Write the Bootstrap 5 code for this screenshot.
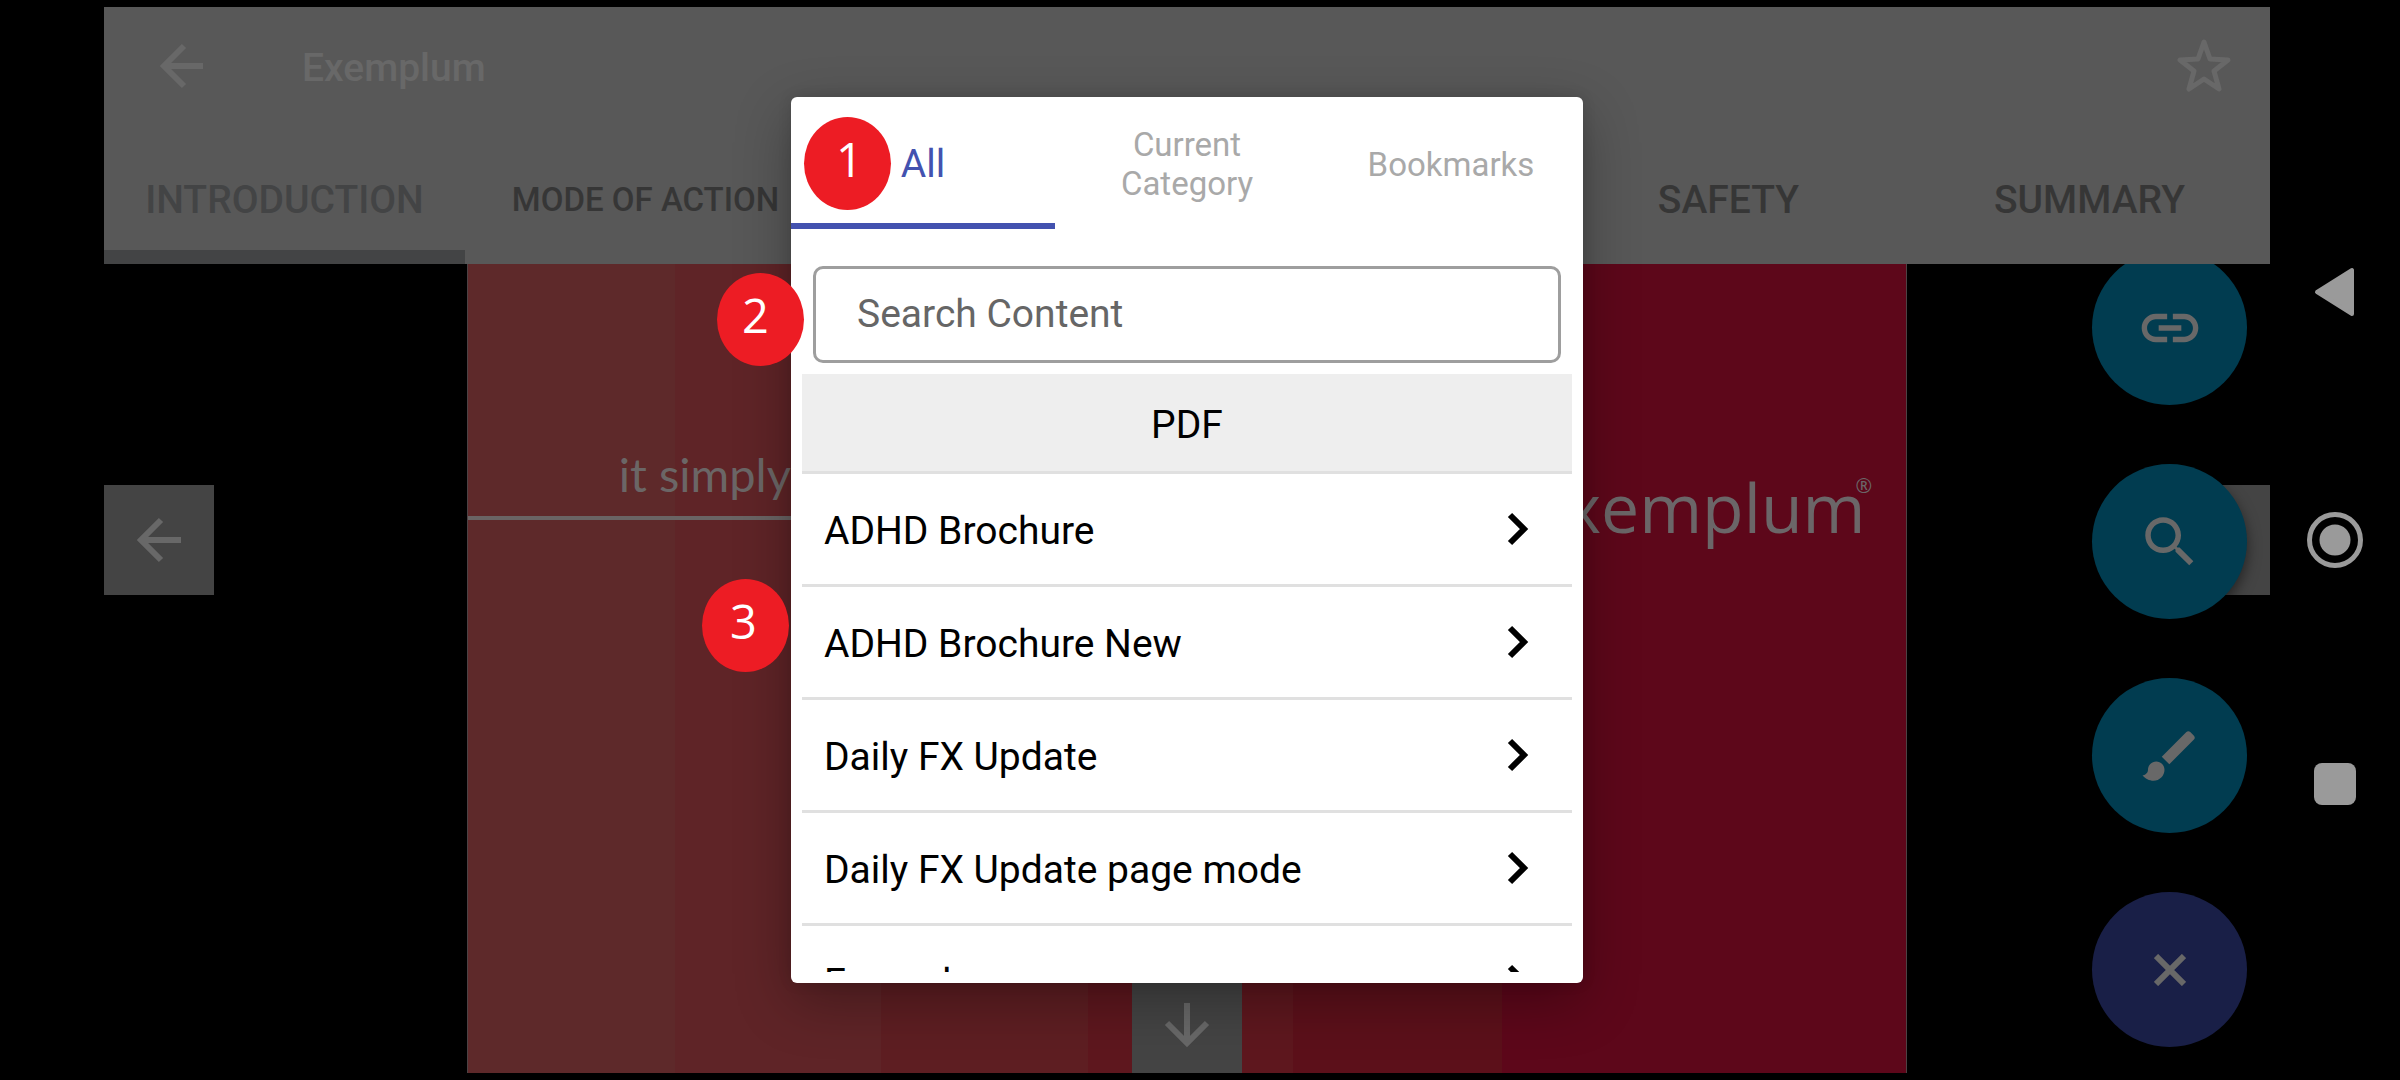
<!DOCTYPE html>
<html lang="en">
<head>
<meta charset="utf-8">
<meta name="viewport" content="width=device-width, initial-scale=1">
<title>Exemplum</title>
<link href="https://cdn.jsdelivr.net/npm/bootstrap@5.3.0/dist/css/bootstrap.min.css" rel="stylesheet">
<script src="https://cdn.jsdelivr.net/npm/bootstrap@5.3.0/dist/js/bootstrap.bundle.min.js"></script>
<style>
body { background: #000; font-family: Roboto, "Liberation Sans", sans-serif; color: #000; }
button { font-family: inherit; }
.device { padding-left: 104px; }
.stage { padding: 7px 0; }
.app-head { background: #585858; height: 257px; z-index: 2; }
.title-row { height: 120px; padding: 0 39px 0 51px; color: #686868; }
.app-title { font-size: 39px; font-weight: 500; line-height: 48px; margin-left: 95px; padding-top: 2px; }
.plain-btn { background: none; border: 0; padding: 0; display: flex; color: inherit; }
.chapter { flex: 1 1 0; color: #363636; font-size: 39px; font-weight: 500; line-height: 48px; text-decoration: none; text-align: center; padding: 49px 0 26px; border-bottom: 14px solid transparent; white-space: nowrap; }
.chapter-long { font-size: 33px; }
.chapter.active { color: #434445; border-color: #434445; }
.slide-art { width: 66.5%; padding-top: 180px; border: 1px solid #4c4244; border-width: 0 1px;
  background: linear-gradient(90deg, #5e292a 14.4%, #5f2427 14.4% 28.7%, #5e1e22 28.7% 43.1%, #5e171e 43.1% 57.4%, #5c101a 57.4% 71.9%, #5d071a 71.9%); }
.tagline { font-family: Lato, sans-serif; font-weight: 400; font-size: 47px; line-height: 60px; color: #6b6666; padding-left: 151px; margin: 0 0 12px; }
.rule { height: 4px; background: #6a6464; }
.brand { font-family: "Open Sans", "Noto Sans", sans-serif; font-size: 68px; font-weight: 500; line-height: 92px; color: #6b6668; padding-right: 34px; margin: 17px 0 0; }
.brand sup { font-size: 20px; top: -40px; margin-left: -10px; }
.pager { width: 110px; height: 110px; background: #444; color: #686868; justify-content: center; align-items: center; }
.pager-row { padding-bottom: 7px; padding-top: 7px; }
.pager-down { padding-top: 14px; }
.fabs { right: 23px; bottom: 33px; gap: 59px; z-index: 1; }
.fab { width: 155px; height: 155px; border-radius: 50%; background: #013c50; color: #686868; align-items: center; justify-content: center; box-shadow: 0 6px 14px rgba(0,0,0,.5); }
.fab-close { background: #191f47; }
.sysnav { width: 130px; gap: 195px; color: #9a9a9a; padding-bottom: 8px; }
.dialog-layer { z-index: 5; }
.dialog-box { width: 792px; height: 886px; background: #fff; border-radius: 6px; box-shadow: 0 18px 56px rgba(0,0,0,.3), 0 0 14px rgba(0,0,0,.12); padding-bottom: 11px; }
.filter { flex: 1 1 0; height: 132px; color: #a9a9a9; font-size: 33px; line-height: 39px; border-bottom: 6px solid transparent; align-items: center; justify-content: center; padding: 8px 30px 0; }
.filter.active { color: #4352af; border-color: #4352af; font-size: 39px; }
.search { margin: 37px 22px 11px; }
.search input { height: 97px; border: 3px solid #9e9e9e; border-radius: 10px; padding: 0 41px 2px; font-size: 39px; background: #fff; }
.search input::placeholder { color: #666; opacity: 1; }
.results { margin: 0 11px; overflow: hidden; flex: 1 1 0; min-height: 0; font-size: 39px; line-height: 48px; }
.group-head { height: 100px; background: #eee; border-bottom: 3px solid #e0e0e0; font-size: 39px; line-height: 48px; font-weight: 400; padding-top: 4px; margin: 0; }
.entry { height: 113px; border-bottom: 3px solid #e0e0e0; padding: 4px 42px 0 22px; color: #000; text-decoration: none; }
.entry svg { margin-bottom: 5px; }
.note { width: 87px; height: 93px; border-radius: 50%; background: #ed1c24; color: #fff; font-family: "Open Sans", "Noto Sans", sans-serif; font-size: 47px; line-height: 85px; text-align: center; }
.note-1 { left: 13px; top: 20px; padding-left: 4px; }
.note-2 { left: -74px; top: 176px; padding-right: 10px; }
.note-3 { left: -89px; top: 482px; padding-right: 4px; }
</style>
</head>
<body>
<div class="device d-flex vh-100 overflow-hidden">
  <main class="stage d-flex flex-column flex-grow-1 position-relative">
    <header class="app-head d-flex flex-column justify-content-between position-relative">
      <div class="title-row d-flex align-items-center">
        <button class="plain-btn" type="button" aria-label="Back"><svg width="52" height="64" viewBox="0 0 52 64" fill="none" stroke="currentColor" stroke-width="6"><path d="M48 31H9M29 11L9 31L29 51"/></svg></button>
        <h1 class="app-title mb-0">Exemplum</h1>
        <button class="plain-btn ms-auto" type="button" aria-label="Bookmark"><svg width="54" height="58" viewBox="0 0 54 58" fill="none" stroke="currentColor" stroke-width="5" stroke-linejoin="round"><path d="M27 4L33 21L51 22L37 33L42 51L27 41L12 51L17 33L3 22L21 21Z"/></svg></button>
      </div>
      <nav class="d-flex">
        <a class="chapter active" href="#">INTRODUCTION</a>
        <a class="chapter chapter-long" href="#">MODE OF ACTION</a>
        <a class="chapter" href="#">EFFICACY</a>
        <a class="chapter" href="#">DOSING</a>
        <a class="chapter" href="#">SAFETY</a>
        <a class="chapter" href="#">SUMMARY</a>
      </nav>
    </header>

    <section class="slide-art flex-grow-1 align-self-center d-flex align-items-start">
      <div class="w-50">
        <p class="tagline">it simply</p>
        <div class="rule"></div>
      </div>
      <p class="brand w-50 text-end">exemplum<sup>®</sup></p>
    </section>

    <div class="pager-row position-absolute top-0 start-0 w-100 h-100 d-flex align-items-center justify-content-between">
      <button class="plain-btn pager" type="button" aria-label="Previous slide"><svg width="52" height="52" viewBox="0 0 52 52" fill="none" stroke="currentColor" stroke-width="6"><path d="M48 26H8M28 6L8 26L28 46"/></svg></button>
      <button class="plain-btn pager pager-down align-self-end" type="button" aria-label="Next page"><svg width="52" height="52" viewBox="0 0 52 52" fill="none" stroke="currentColor" stroke-width="6"><path d="M26 4V44M6 24L26 44L46 24"/></svg></button>
      <button class="plain-btn pager" type="button" aria-label="Next slide"></button>
    </div>

    <div class="fabs position-absolute d-flex flex-column">
      <button class="plain-btn fab" type="button" aria-label="Link"><svg width="68" height="68" viewBox="0 0 24 24" fill="currentColor"><path d="M3.9 12c0-1.71 1.39-3.1 3.1-3.1h4V7H7c-2.76 0-5 2.24-5 5s2.24 5 5 5h4v-1.900H7c-1.710 0-3.100-1.390-3.100-3.100zM8 13h8v-2H8v2zm9-6h-4v1.900h4c1.710 0 3.100 1.390 3.100 3.100s-1.390 3.100-3.100 3.100h-4V17h4c2.760 0 5-2.240 5-5s-2.240-5-5-5z"/></svg></button>
      <button class="plain-btn fab" type="button" aria-label="Search"><svg width="66" height="66" viewBox="0 0 24 24" fill="currentColor"><path d="M15.500 14h-.790l-.280-.270C15.410 12.590 16 11.110 16 9.500 16 5.910 13.090 3 9.500 3S3 5.910 3 9.500 5.910 16 9.500 16c1.610 0 3.090-.590 4.230-1.570l.270.280v.790l5 4.990L20.490 19l-4.990-5zm-6 0C7.010 14 5 11.990 5 9.500S7.010 5 9.500 5 14 7.010 14 9.500 11.990 14 9.500 14z"/></svg></button>
      <button class="plain-btn fab" type="button" aria-label="Draw"><svg width="66" height="66" viewBox="0 0 24 24" fill="currentColor"><path d="M7 14c-1.660 0-3 1.340-3 3 0 1.310-1.160 2-2 2 .920 1.220 2.490 2 4 2 2.210 0 4-1.790 4-4 0-1.660-1.340-3-3-3zm13.710-9.370l-1.340-1.340c-.390-.390-1.020-.390-1.410 0L9 12.250 11.750 15l8.960-8.960c.390-.390.390-1.020 0-1.410z"/></svg></button>
      <button class="plain-btn fab fab-close" type="button" aria-label="Close menu"><svg width="32" height="32" viewBox="0 0 32 32" stroke="currentColor" stroke-width="6"><path d="M2 2L30 30M30 2L2 30"/></svg></button>
    </div>

    <div class="dialog-layer position-absolute top-0 start-0 w-100 h-100 d-flex align-items-center justify-content-center">
      <div class="dialog-box position-relative d-flex flex-column" role="dialog" aria-label="Content">
        <div class="d-flex">
          <button class="plain-btn filter active" type="button">All</button>
          <button class="plain-btn filter" type="button">Current Category</button>
          <button class="plain-btn filter" type="button">Bookmarks</button>
        </div>
        <div class="search">
          <label class="visually-hidden" for="q">Search Content</label>
          <input class="form-control" id="q" type="text" placeholder="Search Content">
        </div>
        <div class="results">
          <h2 class="group-head d-flex align-items-center justify-content-center">PDF</h2>
          <a class="entry d-flex align-items-center justify-content-between" href="#">ADHD Brochure<svg width="24" height="36" viewBox="0 0 24 36" fill="none" stroke="currentColor" stroke-width="6"><path d="M4 4L18 18L4 32"/></svg></a>
          <a class="entry d-flex align-items-center justify-content-between" href="#">ADHD Brochure New<svg width="24" height="36" viewBox="0 0 24 36" fill="none" stroke="currentColor" stroke-width="6"><path d="M4 4L18 18L4 32"/></svg></a>
          <a class="entry d-flex align-items-center justify-content-between" href="#">Daily FX Update<svg width="24" height="36" viewBox="0 0 24 36" fill="none" stroke="currentColor" stroke-width="6"><path d="M4 4L18 18L4 32"/></svg></a>
          <a class="entry d-flex align-items-center justify-content-between" href="#">Daily FX Update page mode<svg width="24" height="36" viewBox="0 0 24 36" fill="none" stroke="currentColor" stroke-width="6"><path d="M4 4L18 18L4 32"/></svg></a>
          <a class="entry d-flex align-items-center justify-content-between" href="#">Exemplum<svg width="24" height="36" viewBox="0 0 24 36" fill="none" stroke="currentColor" stroke-width="6"><path d="M4 4L18 18L4 32"/></svg></a>
        </div>
        <span class="note note-1 position-absolute">1</span>
        <span class="note note-2 position-absolute">2</span>
        <span class="note note-3 position-absolute">3</span>
      </div>
    </div>
  </main>

  <nav class="sysnav d-flex flex-column align-items-center justify-content-center" aria-label="System">
    <button class="plain-btn" type="button" aria-label="System back"><svg width="42" height="50" viewBox="0 0 42 50" fill="currentColor" stroke="currentColor" stroke-width="4" stroke-linejoin="round"><path d="M38 3V47L3 25Z"/></svg></button>
    <button class="plain-btn" type="button" aria-label="Home"><svg width="56" height="56" viewBox="0 0 56 56"><circle cx="28" cy="28" r="25.500" fill="none" stroke="currentColor" stroke-width="5"/><circle cx="28" cy="28" r="15.500" fill="currentColor"/></svg></button>
    <button class="plain-btn" type="button" aria-label="Recent apps"><svg width="42" height="42" viewBox="0 0 42 42"><rect width="42" height="42" rx="8" fill="currentColor"/></svg></button>
  </nav>
</div>
</body>
</html>
